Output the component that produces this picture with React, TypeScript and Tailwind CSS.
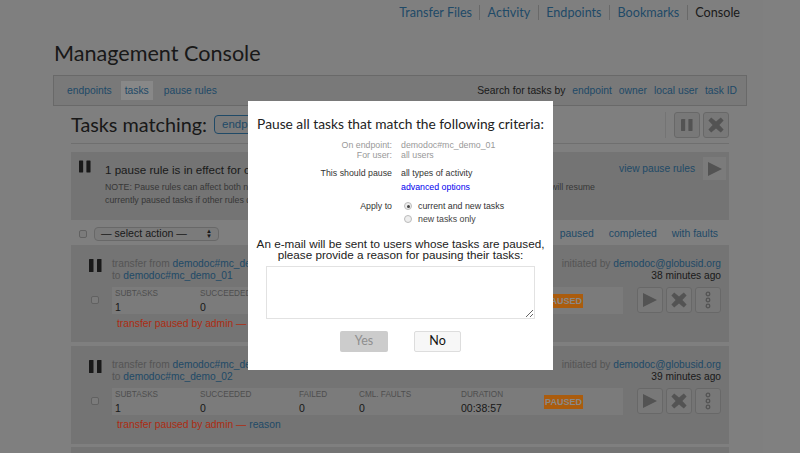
const sans = "font-['Liberation_Sans',Arial,sans-serif]"
const lato = "font-['Lato',sans-serif]"

function PauseIcon({ className }: { className: string }) {
  return (
    <svg viewBox="0 0 13 13" className={className} fill="currentColor">
      <rect x="0" y="0" width="4.5" height="13" rx="0.5" />
      <rect x="8" y="0" width="4.5" height="13" rx="0.5" />
    </svg>
  )
}

function PlayIcon({ className }: { className: string }) {
  return (
    <svg viewBox="0 0 14 14" className={className} fill="currentColor">
      <path d="M0 0 L14 7 L0 14 Z" />
    </svg>
  )
}

function CrossIcon({ className }: { className: string }) {
  return (
    <svg viewBox="0 0 16 16" className={className} fill="currentColor">
      <path d="M3.2.6 8 4.6 12.8.6 15.6 3.4 11.4 8l4.2 4.6-2.8 2.8L8 11.4l-4.8 4-2.8-2.8L4.6 8 .4 3.4Z" />
    </svg>
  )
}

function DotsIcon() {
  return (
    <svg viewBox="0 0 6 18" className="w-[6px] h-[18px]" fill="none" stroke="currentColor" strokeWidth="1.3">
      <circle cx="3" cy="3" r="1.8" />
      <circle cx="3" cy="9" r="1.8" />
      <circle cx="3" cy="15" r="1.8" />
    </svg>
  )
}

function SquareButton({ children }: { children: React.ReactNode }) {
  return (
    <div className="w-[26px] h-[26px] flex items-center justify-center border border-[#969696] rounded-[3px] bg-[#acacac] text-[#787878]">
      {children}
    </div>
  )
}

function Checkbox() {
  return <div className="w-[8px] h-[8px] rounded-[2px] border border-[#8c8c8c] bg-[#b1b1b1] shrink-0" />
}

const columns = [
  { label: 'SUBTASKS', value: '1', width: 'w-[85px]' },
  { label: 'SUCCEEDED', value: '0', width: 'w-[99px]' },
  { label: 'FAILED', value: '0', width: 'w-[60px]' },
  { label: 'CML. FAULTS', value: '0', width: 'w-[102px]' },
  { label: 'DURATION', value: '00:38:57', width: 'w-[83px]' },
]

function TaskRow({ dest, time, box }: { dest: string; time: string; box: string }) {
  return (
    <div className={`bg-[#a6a6a6] flex pl-[18px] pr-[8px] pt-[14px] ${box}`}>
      <div className="w-[23px] flex flex-col shrink-0">
        <PauseIcon className="w-[13px] h-[13px] text-[#252525]" />
        <div className="ml-[2px] mt-[24px]">
          <Checkbox />
        </div>
      </div>
      <div className="flex-1 -mt-[1px]">
        <div className="flex justify-between text-[10.2px] leading-[12px] text-[#7a7a7a]">
          <div>
            <div>
              transfer from <a className="text-[#2f6a94]">demodoc#mc_demo_01</a>
            </div>
            <div>
              to <a className="text-[#2f6a94]">{dest}</a>
            </div>
          </div>
          <div className="text-right">
            <div>
              initiated by <a className="text-[#2f6a94]">demodoc@globusid.org</a>
            </div>
            <div className="text-[#282828]">{time}</div>
          </div>
        </div>
        <div className="flex justify-between mt-[5px]">
          <div className="w-[511px] h-[27px] bg-[#b1b1b1] flex items-center pl-[3px]">
            {columns.map((c) => (
              <div key={c.label} className={`${c.width} shrink-0`}>
                <div className="text-[8.2px] leading-[12px] text-[#707070]">{c.label}</div>
                <div className="text-[10.5px] leading-[14px] text-[#252525]">{c.value}</div>
              </div>
            ))}
            <div className="bg-[#f58414] text-[#c4c4c4] text-[9px] font-bold w-[39px] h-[14px] leading-[14px] text-center">
              PAUSED
            </div>
          </div>
          <div className="flex gap-[3px]">
            <SquareButton>
              <PlayIcon className="w-[14px] h-[14px]" />
            </SquareButton>
            <SquareButton>
              <CrossIcon className="w-[16px] h-[16px]" />
            </SquareButton>
            <SquareButton>
              <DotsIcon />
            </SquareButton>
          </div>
        </div>
        <div className="mt-[3px] ml-[5px] text-[10.3px] leading-[14px] text-[#f5401a]">
          transfer paused by admin — <a className="text-[#2f6a94]">reason</a>
        </div>
      </div>
    </div>
  )
}

export default function App() {
  return (
    <div className={`relative w-[800px] h-[453px] overflow-hidden bg-[#b7b7b7] ${sans}`}>
      {/* Top nav */}
      <div className={`h-[25px] flex justify-end items-center pr-[60px] text-[12.6px] text-[#2f6a94] ${lato}`}>
        <a className="pr-[7px] border-r border-[#979797] leading-[15px]">Transfer Files</a>
        <a className="px-[7.5px] border-r border-[#979797] leading-[15px]">Activity</a>
        <a className="px-[7.5px] border-r border-[#979797] leading-[15px]">Endpoints</a>
        <a className="px-[7.5px] border-r border-[#979797] leading-[15px]">Bookmarks</a>
        <span className="pl-[7.5px] leading-[15px] text-[#282828]">Console</span>
      </div>

      <div className="ml-[53px] w-[694px]">
        <h1 className={`mt-[15px] ml-[1px] h-[35px] text-[21.6px] leading-[26px] text-[#252525] ${lato}`}>Management Console</h1>

        {/* Toolbar */}
        <div className="h-[31px] bg-[#aeaeae] border border-[#979797] flex items-center justify-between pl-[8px] pr-[9px] text-[10.3px] text-[#2f6a94]">
          <div className="flex items-center">
            <a className="px-[5px]">endpoints</a>
            <a className="ml-[4px] h-[19px] leading-[19px] px-[4px] bg-[#c3c3c3]">tasks</a>
            <a className="ml-[11px]">pause rules</a>
          </div>
          <div className="flex gap-[7px]">
            <span className="text-[#282828]">Search for tasks by</span>
            <a>endpoint</a>
            <a>owner</a>
            <a>local user</a>
            <a>task ID</a>
          </div>
        </div>

        <div className="mx-[18px]">
          {/* Heading row */}
          <div className="h-[38px] flex items-center justify-between border-b border-[#a0a0a0]">
            <div className="flex items-center">
              <h2 className={`text-[19.8px] text-[#252525] ${lato}`}>Tasks matching:</h2>
              <div className="ml-[7px] h-[19px] px-[7px] border border-[#2f6a94] rounded-[4px] bg-[#b1b1b1] text-[11.5px] leading-[17px] text-[#2f6a94]">
                endpoint
              </div>
            </div>
            <div className="flex items-center gap-[3px] h-[26px] border-l border-[#a6a6a6] pl-[8px]">
              <SquareButton>
                <PauseIcon className="w-[12px] h-[12px]" />
              </SquareButton>
              <SquareButton>
                <CrossIcon className="w-[16px] h-[16px]" />
              </SquareButton>
            </div>
          </div>

          {/* Pause rule notice */}
          <div className="mt-[8px] h-[68px] bg-[#a6a6a6] flex pl-[8px] pr-[3px] pt-[8px]">
            <PauseIcon className="w-[12px] h-[13px] text-[#252525] shrink-0" />
            <div className="flex-1 min-w-0 ml-[14px]">
              <div className="flex justify-between h-[18px]">
                <span className="text-[11.6px] leading-[17px] mt-[1px] text-[#282828]">1 pause rule is in effect for one of your tasks</span>
                <div className="flex text-[10.2px] text-[#2f6a94]">
                  <a className="mt-[1px]">view pause rules</a>
                  <div className="ml-[8px] -mt-[3px] w-[23px] h-[23px] bg-[#b1b1b1] flex items-center justify-center text-[#787878]">
                    <PlayIcon className="w-[14px] h-[14px]" />
                  </div>
                </div>
              </div>
              <div className="text-[8.8px] leading-[13px] mt-[3px] text-[#505050]">
                <div className="w-[490px] flex justify-between">
                  <span>NOTE: Pause rules can affect both new and existing tasks.</span>
                  <span>will resume</span>
                </div>
                <div>currently paused tasks if other rules do not apply</div>
              </div>
            </div>
          </div>

          {/* Action row */}
          <div className="h-[25px] flex items-center justify-between pl-[8px] pr-[11px] pt-[3px]">
            <div className="flex items-center">
              <Checkbox />
              <div className="ml-[7px] w-[125px] h-[14px] rounded-[4px] border border-[#969696] bg-[#b1b1b1] flex items-center justify-between px-[6px] text-[10.6px] text-[#282828]">
                — select action —
                <span className="text-[6px] leading-[5px] flex flex-col text-[#252525]">
                  <span>▲</span>
                  <span>▼</span>
                </span>
              </div>
            </div>
            <div className="flex gap-[15px] text-[10.4px] text-[#2f6a94]">
              <a>paused</a>
              <a>completed</a>
              <a>with faults</a>
            </div>
          </div>

          <TaskRow dest="demodoc#mc_demo_01" time="38 minutes ago" box="h-[97px] mb-[4px]" />
          <TaskRow dest="demodoc#mc_demo_02" time="39 minutes ago" box="h-[98px] mb-[3px]" />
          <div className="h-[10px] bg-[#a6a6a6]" />
        </div>
      </div>

      {/* Overlay */}
      <div className="absolute inset-0 bg-black/30" />

      {/* Modal */}
      <div className="absolute left-[248px] top-[101px] w-[305px] h-[269px] bg-white flex flex-col items-center">
        <h3 className={`mt-[14px] h-[23px] text-[13.75px] leading-[18px] text-[#222] whitespace-nowrap ${lato}`}>
          Pause all tasks that match the following criteria:
        </h3>
        <div className="w-full text-[8.8px]">
          <div className="grid grid-cols-[144px_1fr] gap-x-[9px] leading-[10px] text-[#999] mt-[2px]">
            <span className="text-right">On endpoint:</span>
            <span>demodoc#mc_demo_01</span>
            <span className="text-right">For user:</span>
            <span>all users</span>
          </div>
          <div className="grid grid-cols-[144px_1fr] gap-x-[9px] leading-[10px] text-[#333] mt-[8px]">
            <span className="text-right">This should pause</span>
            <span>all types of activity</span>
            <span />
            <a className="mt-[4px] text-[#0000ee]">advanced options</a>
          </div>
          <div className="grid grid-cols-[144px_1fr] gap-x-[9px] leading-[10px] text-[#333] mt-[9px]">
            <span className="text-right">Apply to</span>
            <div className="flex items-center ml-[3px]">
              <span className="w-[8px] h-[8px] rounded-full border border-[#bbb] bg-[#eee] flex items-center justify-center">
                <span className="w-[3px] h-[3px] rounded-full bg-[#444]" />
              </span>
              <span className="ml-[6px]">current and new tasks</span>
            </div>
            <span />
            <div className="flex items-center ml-[3px] mt-[3px]">
              <span className="w-[8px] h-[8px] rounded-full border border-[#bbb] bg-[#eee]" />
              <span className="ml-[6px] text-[#444]">new tasks only</span>
            </div>
          </div>
        </div>
        <p className="mt-[14px] text-[11.7px] leading-[11px] text-center text-[#222] whitespace-nowrap">
          An e-mail will be sent to users whose tasks are paused,
          <br />
          please provide a reason for pausing their tasks:
        </p>
        <textarea className="mt-[6px] w-[269px] h-[53px] border-[1.5px] border-[#e2e2e2] block" />
        <div className="mt-[12px] flex gap-[26px]">
          <button className={`w-[48px] h-[21px] rounded-[2px] bg-[#cccccc] text-[12.5px] text-[#8f8f8f] ${lato}`}>Yes</button>
          <button className={`w-[47px] h-[21px] rounded-[2px] border border-[#ddd] bg-[#f7f7f7] text-[12.5px] text-[#111] ${lato}`}>No</button>
        </div>
      </div>
    </div>
  )
}
